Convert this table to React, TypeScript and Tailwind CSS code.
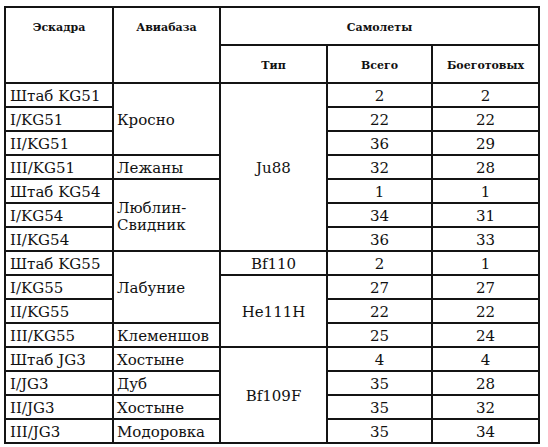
import React from "react";

type Row = {
  sq: string;
  base?: { text: React.ReactNode; span: number; two?: boolean };
  type?: { text: string; span: number };
  total: string;
  ready: string;
};

const rows: Row[] = [
  { sq: "Штаб KG51", base: { text: "Кросно", span: 3 }, type: { text: "Ju88", span: 7 }, total: "2", ready: "2" },
  { sq: "I/KG51", total: "22", ready: "22" },
  { sq: "II/KG51", total: "36", ready: "29" },
  { sq: "III/KG51", base: { text: "Лежаны", span: 1 }, total: "32", ready: "28" },
  { sq: "Штаб KG54", base: { text: <>Люблин-<br />Свидник</>, span: 3, two: true }, total: "1", ready: "1" },
  { sq: "I/KG54", total: "34", ready: "31" },
  { sq: "II/KG54", total: "36", ready: "33" },
  { sq: "Штаб KG55", base: { text: "Лабуние", span: 3 }, type: { text: "Bf110", span: 1 }, total: "2", ready: "1" },
  { sq: "I/KG55", type: { text: "He111H", span: 3 }, total: "27", ready: "27" },
  { sq: "II/KG55", total: "22", ready: "22" },
  { sq: "III/KG55", base: { text: "Клеменшов", span: 1 }, total: "25", ready: "24" },
  { sq: "Штаб JG3", base: { text: "Хостыне", span: 1 }, type: { text: "Bf109F", span: 4 }, total: "4", ready: "4" },
  { sq: "I/JG3", base: { text: "Дуб", span: 1 }, total: "35", ready: "28" },
  { sq: "II/JG3", base: { text: "Хостыне", span: 1 }, total: "35", ready: "32" },
  { sq: "III/JG3", base: { text: "Модоровка", span: 1 }, total: "35", ready: "34" },
];

const bd = "border-2 border-[#141414]";
const th = `${bd} align-top pt-[13px] text-[11px] font-bold leading-[13px] text-center`;
const td = `${bd} h-[24px] p-0 pt-[2px] text-[15px] align-middle`;

export default function App() {
  return (
    <div className="bg-white w-[548px] h-[447px] pl-[4px] pt-[6px] text-[#111]" style={{ fontFamily: '"DejaVu Serif", serif' }}>
      <table className="border-collapse table-fixed w-[536px]">
        <colgroup>
          <col className="w-[108px]" />
          <col className="w-[107px]" />
          <col className="w-[107px]" />
          <col className="w-[105px]" />
          <col className="w-[107px]" />
        </colgroup>
        <thead>
          <tr className="h-[38px]">
            <th rowSpan={2} className={th}>Эскадра</th>
            <th rowSpan={2} className={th}>Авиабаза</th>
            <th colSpan={3} className={th}>Самолеты</th>
          </tr>
          <tr className="h-[38px]">
            <th className={th}>Тип</th>
            <th className={th}>Всего</th>
            <th className={th}>Боеготовых</th>
          </tr>
        </thead>
        <tbody>
          {rows.map((r, i) => (
            <tr key={i} className="h-[24px]">
              <td className={`${td} leading-[16px] pl-[4px] text-left whitespace-nowrap`}>{r.sq}</td>
              {r.base && (
                <td
                  rowSpan={r.base.span}
                  className={`${td} ${r.base.two ? "leading-[17px] pt-[4px]" : "leading-[16px]"} pl-[3px] text-left`}
                >
                  {r.base.text}
                </td>
              )}
              {r.type && (
                <td rowSpan={r.type.span} className={`${td} leading-[16px] text-center`}>{r.type.text}</td>
              )}
              <td className={`${td} leading-[16px] text-center`}>{r.total}</td>
              <td className={`${td} leading-[16px] text-center`}>{r.ready}</td>
            </tr>
          ))}
        </tbody>
      </table>
    </div>
  );
}
